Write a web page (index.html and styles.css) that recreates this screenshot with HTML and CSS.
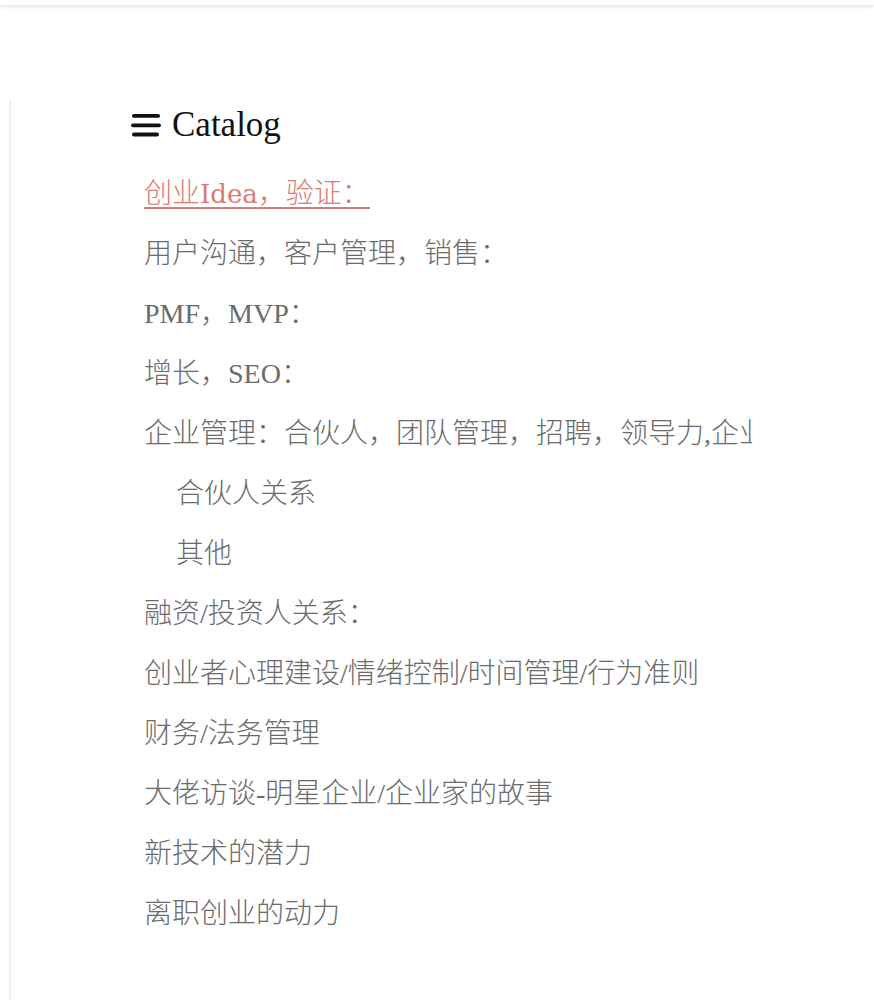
FILE: index.html
```
<!DOCTYPE html>
<html lang="zh-CN">
<head>
<meta charset="utf-8">
<title>Catalog</title>
<link rel="stylesheet" href="styles.css">
</head>
<body>
<div class="topbar"></div>
<div class="page">
  <aside class="sidebar">
    <nav class="catalog">
      <h2 class="catalog-title">
        <svg class="bars" width="30" height="26" viewBox="0 0 30 26" aria-hidden="true">
          <rect x="1" y="2" width="28" height="3.8" rx="1.9"/>
          <rect x="0" y="11.4" width="30" height="3.8" rx="1.9"/>
          <rect x="1" y="20.6" width="27" height="3.8" rx="1.9"/>
        </svg>
        <span>Catalog</span>
      </h2>
      <ul class="toc">
        <li class="toc-item active"><a href="#">创业<span class="latin">Idea</span>，验证：</a></li>
        <li class="toc-item">用户沟通，客户管理，销售：</li>
        <li class="toc-item">PMF，MVP：</li>
        <li class="toc-item">增长，SEO：</li>
        <li class="toc-item">企业管理：合伙人，团队管理，招聘，领导力,企业文化</li>
        <li class="toc-item sub">合伙人关系</li>
        <li class="toc-item sub">其他</li>
        <li class="toc-item">融资/投资人关系：</li>
        <li class="toc-item">创业者心理建设/情绪控制/时间管理/行为准则</li>
        <li class="toc-item">财务/法务管理</li>
        <li class="toc-item">大佬访谈-明星企业/企业家的故事</li>
        <li class="toc-item">新技术的潜力</li>
        <li class="toc-item">离职创业的动力</li>
      </ul>
    </nav>
  </aside>
</div>
</body>
</html>
```
FILE: styles.css
```
html, body {
  margin: 0;
  padding: 0;
  background: #fff;
}
body {
  font-family: "Liberation Serif", "Noto Sans CJK SC", serif;
}
.topbar {
  height: 5px;
  background: #fff;
  box-shadow: 0 1px 4px rgba(0, 0, 0, 0.16);
  position: relative;
  z-index: 1;
}
.page {
  padding-top: 95px;
  padding-left: 9px;
}
.sidebar {
  border-left: 2px solid #efefef;
  min-height: 900px;
  padding-left: 120px;
}
.catalog {
  width: 621px;
  overflow: hidden;
}
.catalog-title {
  margin: 0;
  height: 50px;
  display: flex;
  align-items: center;
  gap: 11px;
  font-weight: normal;
  font-size: 35px;
  color: #111;
  font-family: "Liberation Serif", serif;
}
.bars {
  fill: #111;
  flex: none;
}
.toc {
  list-style: none;
  margin: 0;
  padding: 14px 0 0 13px;
}
.toc-item {
  height: 60px;
  line-height: 60px;
  font-size: 28px;
  color: #6b6b6b;
  white-space: nowrap;
  font-weight: 300;
}
.toc-item.sub {
  padding-left: 32px;
}
.toc-item a {
  color: #dc7a72;
  text-decoration: underline;
  text-decoration-thickness: 2px;
  text-underline-offset: 4px;
}
.latin {
  font-family: "DejaVu Serif", serif;
  font-size: 26px;
}
```
